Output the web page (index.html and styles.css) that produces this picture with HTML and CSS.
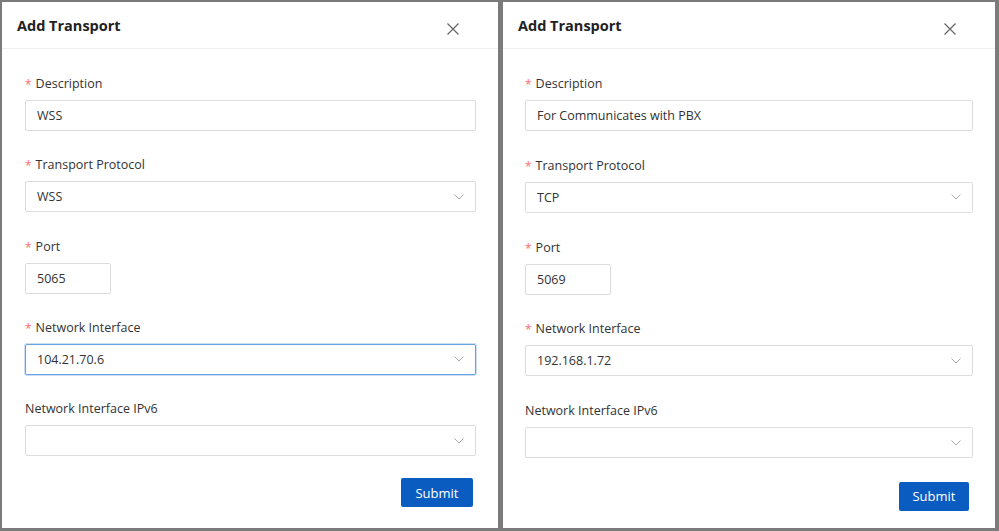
FILE: index.html
```html
<!DOCTYPE html>
<html lang="en">
<head>
<meta charset="utf-8">
<title>Add Transport</title>
<link rel="stylesheet" href="styles.css">
</head>
<body>
<div class="screen">
  <section class="dialog dialog-left">
    <header class="dialog-header">
      <h2 class="dialog-title">Add Transport</h2>
      <button class="close-btn" aria-label="Close">
        <svg width="12" height="12" viewBox="0 0 12 12"><path d="M0.5 0.5 L11.5 11.5 M11.5 0.5 L0.5 11.5" stroke="#666" stroke-width="1.2" fill="none"/></svg>
      </button>
    </header>
    <div class="dialog-body">
      <div class="form-item">
        <label class="form-label"><span class="req">*</span>Description</label>
        <div class="field">WSS</div>
      </div>
      <div class="form-item">
        <label class="form-label"><span class="req">*</span>Transport Protocol</label>
        <div class="field select">WSS<svg class="chev" width="10" height="6" viewBox="0 0 10 6"><path d="M0.5 0.5 L5 5 L9.5 0.5" stroke="#aaa" stroke-width="1" fill="none"/></svg></div>
      </div>
      <div class="form-item">
        <label class="form-label"><span class="req">*</span>Port</label>
        <div class="field port">5065</div>
      </div>
      <div class="form-item">
        <label class="form-label"><span class="req">*</span>Network Interface</label>
        <div class="field select focused">104.21.70.6<svg class="chev" width="10" height="6" viewBox="0 0 10 6"><path d="M0.5 0.5 L5 5 L9.5 0.5" stroke="#aaa" stroke-width="1" fill="none"/></svg></div>
      </div>
      <div class="form-item">
        <label class="form-label">Network Interface IPv6</label>
        <div class="field select"><svg class="chev" width="10" height="6" viewBox="0 0 10 6"><path d="M0.5 0.5 L5 5 L9.5 0.5" stroke="#aaa" stroke-width="1" fill="none"/></svg></div>
      </div>
    </div>
    <footer class="dialog-footer">
      <button class="submit">Submit</button>
    </footer>
  </section>
  <section class="dialog dialog-right">
    <header class="dialog-header">
      <h2 class="dialog-title">Add Transport</h2>
      <button class="close-btn" aria-label="Close">
        <svg width="12" height="12" viewBox="0 0 12 12"><path d="M0.5 0.5 L11.5 11.5 M11.5 0.5 L0.5 11.5" stroke="#666" stroke-width="1.2" fill="none"/></svg>
      </button>
    </header>
    <div class="dialog-body">
      <div class="form-item">
        <label class="form-label"><span class="req">*</span>Description</label>
        <div class="field">For Communicates with PBX</div>
      </div>
      <div class="form-item">
        <label class="form-label"><span class="req">*</span>Transport Protocol</label>
        <div class="field select">TCP<svg class="chev" width="10" height="6" viewBox="0 0 10 6"><path d="M0.5 0.5 L5 5 L9.5 0.5" stroke="#aaa" stroke-width="1" fill="none"/></svg></div>
      </div>
      <div class="form-item">
        <label class="form-label"><span class="req">*</span>Port</label>
        <div class="field port">5069</div>
      </div>
      <div class="form-item">
        <label class="form-label"><span class="req">*</span>Network Interface</label>
        <div class="field select">192.168.1.72<svg class="chev" width="10" height="6" viewBox="0 0 10 6"><path d="M0.5 0.5 L5 5 L9.5 0.5" stroke="#aaa" stroke-width="1" fill="none"/></svg></div>
      </div>
      <div class="form-item">
        <label class="form-label">Network Interface IPv6</label>
        <div class="field select"><svg class="chev" width="10" height="6" viewBox="0 0 10 6"><path d="M0.5 0.5 L5 5 L9.5 0.5" stroke="#aaa" stroke-width="1" fill="none"/></svg></div>
      </div>
    </div>
    <footer class="dialog-footer">
      <button class="submit">Submit</button>
    </footer>
  </section>
</div>
</body>
</html>
```
FILE: styles.css
```css
* { box-sizing: border-box; }
html, body { margin: 0; padding: 0; }
body {
  background: #7b7b7b;
  font-family: "Open Sans", "Noto Sans", sans-serif;
  color: #333;
}
.screen {
  display: flex;
  gap: 5px;
  width: 999px;
  height: 531px;
  padding: 2px 4px 3px 2px;
}
.dialog {
  background: #fff;
  display: flex;
  flex-direction: column;
  height: 526px;
}
.dialog-left { width: 496px; }
.dialog-right { width: 492px; }
.dialog-header {
  height: 47px;
  border-bottom: 1px solid #f0f0f0;
  display: flex;
  align-items: center;
  justify-content: space-between;
  padding: 0 27px 0 15px;
}
.dialog-title {
  margin: 0;
  font-size: 14.5px;
  font-weight: 700;
  color: #222;
}
.close-btn {
  border: 0;
  background: transparent;
  width: 36px;
  height: 36px;
  display: flex;
  align-items: center;
  justify-content: center;
  padding: 0;
  margin-top: 7px;
}
.dialog-body {
  padding: 24px 22px 0 23px;
}
.dialog-right .dialog-body {
  padding: 24px 22px 0 22px;
}
.form-item {
  margin-bottom: 23.25px;
}
.dialog-right .form-item {
  margin-bottom: 23.75px;
}
.form-label {
  display: flex;
  align-items: center;
  height: 20px;
  padding-top: 1px;
  font-size: 12.5px;
  color: #333;
  margin-bottom: 7px;
}
.req {
  color: #ff6b6b;
  font-size: 12px;
  margin-right: 4px;
  position: relative;
  top: 1px;
}
.field {
  height: 31px;
  border: 1px solid #dcdcdc;
  border-radius: 2px;
  display: flex;
  align-items: center;
  padding: 0 11px;
  font-size: 12.5px;
  color: #333;
}
.field.select { justify-content: space-between; }
.field.select .chev { margin-left: auto; }
.field.port { width: 86px; }
.field.focused {
  border-color: #69a1e3;
  box-shadow: 0 0 0 1px rgba(105, 161, 227, 0.35);
}
.dialog-footer {
  display: flex;
  justify-content: flex-end;
  padding: 0 25px 0 0;
  margin-top: -1px;
}
.dialog-right .dialog-footer {
  padding-right: 26px;
  margin-top: 0;
}
.submit {
  width: 72px;
  height: 29px;
  border: 0;
  border-radius: 2px;
  background: #0b5cc0;
  color: #fff;
  font-family: "Open Sans", "Noto Sans", sans-serif;
  font-size: 13px;
}
.dialog-right .submit { width: 70px; }
```
